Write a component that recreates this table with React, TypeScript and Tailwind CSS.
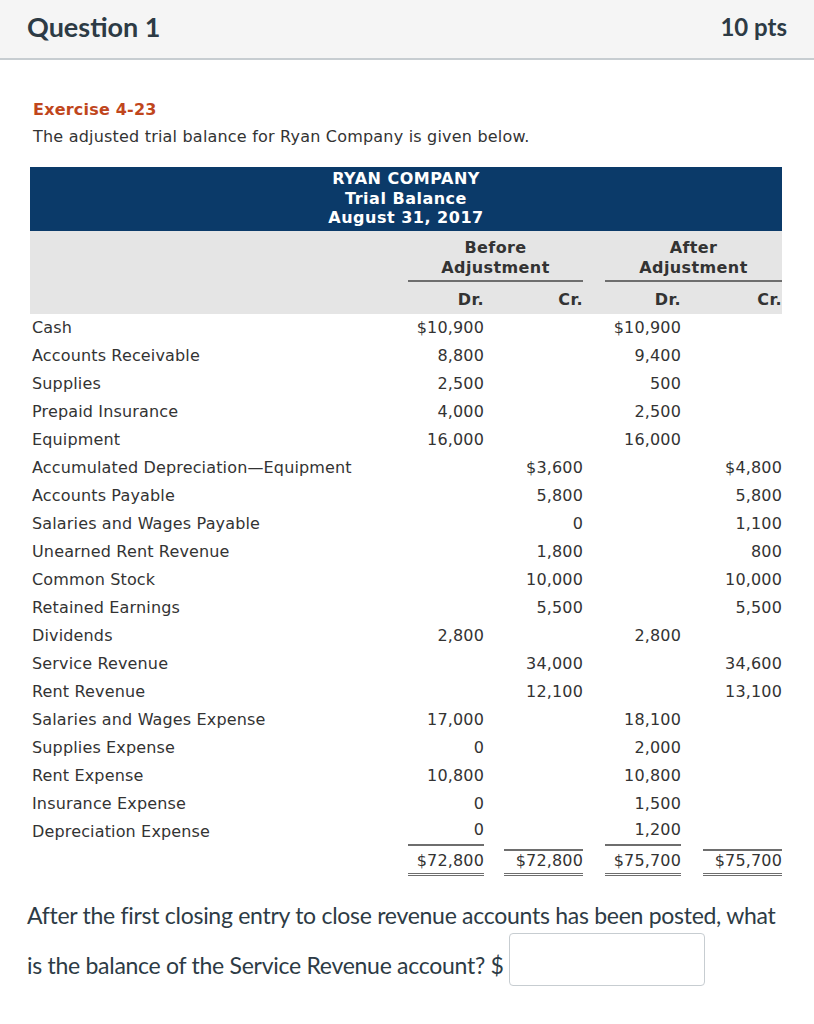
const rows: [string, string, string, string, string][] = [
  ["Cash", "$10,900", "", "$10,900", ""],
  ["Accounts Receivable", "8,800", "", "9,400", ""],
  ["Supplies", "2,500", "", "500", ""],
  ["Prepaid Insurance", "4,000", "", "2,500", ""],
  ["Equipment", "16,000", "", "16,000", ""],
  ["Accumulated Depreciation\u2014Equipment", "", "$3,600", "", "$4,800"],
  ["Accounts Payable", "", "5,800", "", "5,800"],
  ["Salaries and Wages Payable", "", "0", "", "1,100"],
  ["Unearned Rent Revenue", "", "1,800", "", "800"],
  ["Common Stock", "", "10,000", "", "10,000"],
  ["Retained Earnings", "", "5,500", "", "5,500"],
  ["Dividends", "2,800", "", "2,800", ""],
  ["Service Revenue", "", "34,000", "", "34,600"],
  ["Rent Revenue", "", "12,100", "", "13,100"],
  ["Salaries and Wages Expense", "17,000", "", "18,100", ""],
  ["Supplies Expense", "0", "", "2,000", ""],
  ["Rent Expense", "10,800", "", "10,800", ""],
  ["Insurance Expense", "0", "", "1,500", ""],
];

const cols = "grid grid-cols-[358px_96px_99px_98px_101px]";

const App = () => {
  return (
    <div className="w-[814px] min-h-[1024px] bg-white text-[#333]">
      {/* question header */}
      <div className="h-[60px] bg-[#f5f5f5] border-b-2 border-[#c7cdd1] flex items-center justify-between pl-[27px] pr-[27px] font-['Lato',sans-serif] text-[#2d3b45]">
        <h2 className="text-[27px] font-bold pb-[4px]">Question 1</h2>
        <span className="text-[24px] font-bold pb-[4px]">10 pts</span>
      </div>

      <div className="pl-[33px] pt-[38px] font-['DejaVu_Sans',Verdana,sans-serif] text-[16px] tracking-[0.2px]">
        <p className="text-[#c0461c] font-bold leading-[24px]">Exercise 4-23</p>
        <p className="leading-[24px] mt-[3px]">
          The adjusted trial balance for Ryan Company is given below.
        </p>
      </div>

      {/* trial balance table */}
      <div className="ml-[30px] mt-[18px] w-[752px] font-['DejaVu_Sans',Verdana,sans-serif] text-[16px] tracking-[0.15px]">
        <div className="bg-[#0b3a69] text-white font-bold text-center h-[64px] pt-[2px] leading-[19.5px] tracking-[0.5px]">
          <div>RYAN COMPANY</div>
          <div>Trial Balance</div>
          <div>August 31, 2017</div>
        </div>

        <div className="bg-[#e5e5e5] h-[83px] font-bold pt-[7px] tracking-[0.4px]">
          <div className={cols}>
            <div />
            <div className="col-span-2 pl-[20px]">
              <div className="text-center leading-[20px] border-b-2 border-[#6e6e6e] pb-[2px]">
                Before
                <br />
                Adjustment
              </div>
            </div>
            <div className="col-span-2 pl-[22px]">
              <div className="text-center leading-[20px] border-b-2 border-[#6e6e6e] pb-[2px]">
                After
                <br />
                Adjustment
              </div>
            </div>
          </div>
          <div className={`${cols} mt-[8px] leading-[20px]`}>
            <div />
            <div className="text-right">Dr.</div>
            <div className="text-right">Cr.</div>
            <div className="text-right">Dr.</div>
            <div className="text-right">Cr.</div>
          </div>
        </div>

        {rows.map((r) => (
          <div key={r[0]} className={`${cols} h-[28px] items-center`}>
            <div className="pl-[2px]">{r[0]}</div>
            <div className="text-right">{r[1]}</div>
            <div className="text-right">{r[2]}</div>
            <div className="text-right">{r[3]}</div>
            <div className="text-right">{r[4]}</div>
          </div>
        ))}

        {/* last line, single rule under the debit columns */}
        <div className={`${cols} h-[26px] items-end`}>
          <div className="pl-[2px] pb-[2px]">Depreciation Expense</div>
          <div className="pl-[20px]">
            <div className="text-right border-b-2 border-[#6e6e6e] pb-[2px]">0</div>
          </div>
          <div />
          <div className="pl-[22px]">
            <div className="text-right border-b-2 border-[#6e6e6e] pb-[2px]">1,200</div>
          </div>
          <div />
        </div>

        {/* totals */}
        <div className={`${cols} items-start`}>
          <div />
          <div className="pl-[20px] pt-[7px]">
            <div className="text-right border-b-[3px] border-double border-[#6e6e6e] leading-[20px] pb-[2px]">
              $72,800
            </div>
          </div>
          <div className="pl-[20px] pt-[5px]">
            <div
              className="text-right border-t-2 border-b-[3px] border-double border-t-[#6e6e6e] border-b-[#6e6e6e] leading-[20px] pb-[2px]"
              style={{ borderTopStyle: "solid" }}
            >
              $72,800
            </div>
          </div>
          <div className="pl-[22px] pt-[7px]">
            <div className="text-right border-b-[3px] border-double border-[#6e6e6e] leading-[20px] pb-[2px]">
              $75,700
            </div>
          </div>
          <div className="pl-[22px] pt-[5px]">
            <div
              className="text-right border-t-2 border-b-[3px] border-double border-t-[#6e6e6e] border-b-[#6e6e6e] leading-[20px] pb-[2px]"
              style={{ borderTopStyle: "solid" }}
            >
              $75,700
            </div>
          </div>
        </div>
      </div>

      {/* question text */}
      <div className="pl-[27px] pr-[27px] mt-[14px] font-['Lato',sans-serif] text-[23px] tracking-[-0.28px] text-[#2d3b45] leading-[50px]">
        After the first closing entry to close revenue accounts has been posted, what
        is the balance of the Service Revenue account? ${" "}
        <input
          type="text"
          className="align-middle -mt-[18px] w-[196px] h-[53px] border border-[#c7cdd1] rounded-[4px] bg-white"
        />
      </div>
    </div>
  );
};

export default App;
